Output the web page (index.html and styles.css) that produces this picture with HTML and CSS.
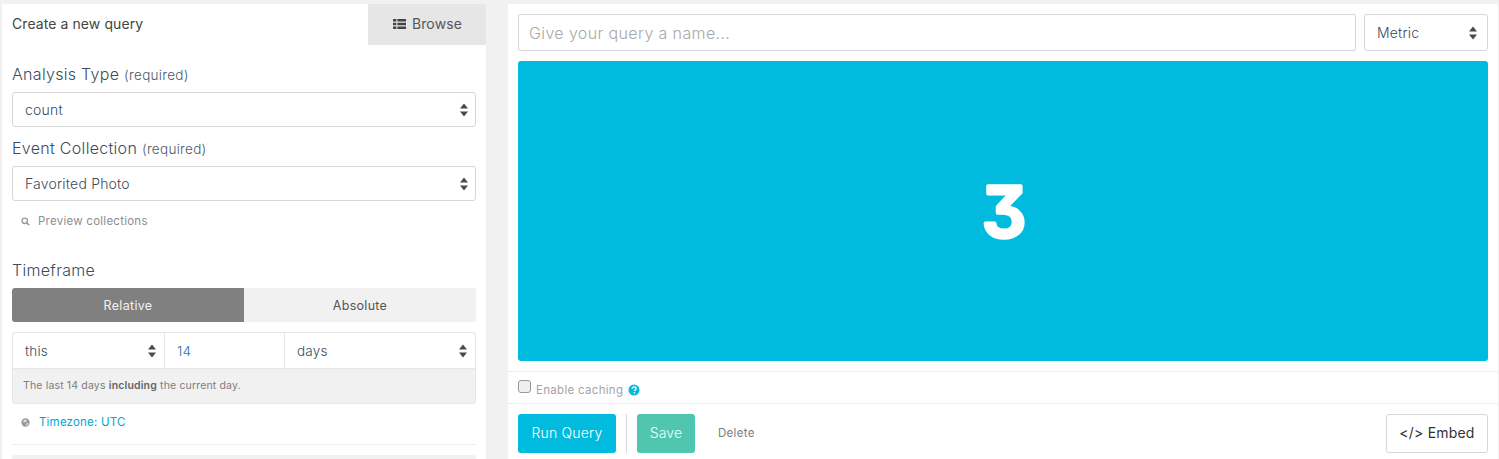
FILE: index.html
```html
<!DOCTYPE html>
<html lang="en">
<head>
<meta charset="utf-8">
<title>Create a new query</title>
<link rel="stylesheet" href="styles.css">
</head>
<body>
<svg class="defs" width="0" height="0" aria-hidden="true">
  <symbol id="updown" viewBox="0 0 10 16"><path d="M5 1.5 9 6.5H1zM5 14.5 1 9.5h8z"/></symbol>
</svg>
<div class="page">
  <aside class="left">
    <div class="tabs">
      <div class="tab-active">Create a new query</div>
      <div class="tab-browse">
        <svg class="th" viewBox="0 0 13 10"><path d="M0 0h3.4v2.6H0zM4.4 0H13v2.6H4.4zM0 3.7h3.4v2.6H0zM4.4 3.7H13v2.6H4.4zM0 7.4h3.4V10H0zM4.4 7.4H13V10H4.4z"/></svg>
        <span>Browse</span>
      </div>
    </div>
    <div class="form">
      <h3 class="label first">Analysis Type <small>(required)</small></h3>
      <div class="select"><span>count</span><svg class="arrows"><use href="#updown"/></svg></div>
      <h3 class="label second">Event Collection <small>(required)</small></h3>
      <div class="select"><span>Favorited Photo</span><svg class="arrows"><use href="#updown"/></svg></div>
      <div class="hint preview">
        <svg class="mini" viewBox="0 0 10 10"><circle cx="4.2" cy="4.2" r="3" fill="none" stroke="#9a9a9a" stroke-width="1.5"/><path d="M6.5 6.5 9.2 9.2" stroke="#9a9a9a" stroke-width="1.7"/></svg>
        <span>Preview collections</span>
      </div>
      <h3 class="label third">Timeframe</h3>
      <div class="toggle">
        <div class="toggle-on">Relative</div>
        <div class="toggle-off">Absolute</div>
      </div>
      <div class="group">
        <div class="group-row">
          <div class="cell cell-this"><span>this</span><svg class="arrows"><use href="#updown"/></svg></div>
          <div class="cell cell-num">14</div>
          <div class="cell cell-days"><span>days</span><svg class="arrows"><use href="#updown"/></svg></div>
        </div>
        <div class="group-help">The last 14 days <b>including</b> the current day.</div>
      </div>
      <div class="hint zone">
        <svg class="mini" viewBox="0 0 10 10"><circle cx="5" cy="5" r="4.6" fill="#9a9a9a"/><path d="M3 2.2 6 1.6 6.6 3.4 4.6 5 2.4 4.2zM6 6 8.2 5.4 7.4 8 6 8.6z" fill="#dedede"/></svg>
        <a class="link">Timezone: UTC</a>
      </div>
      <div class="rule"></div>
      <div class="next-box"></div>
    </div>
  </aside>
  <main class="right">
    <div class="top-row">
      <div class="name-input">Give your query a name...</div>
      <div class="select metric"><span>Metric</span><svg class="arrows"><use href="#updown"/></svg></div>
    </div>
    <div class="chart">
      <svg class="value-svg" viewBox="0 0 80 100"><text class="metric-value" x="41" y="75.5" text-anchor="middle">3</text></svg>
    </div>
    <div class="caching">
      <span class="check"></span>
      <span class="caching-label">Enable caching</span>
      <svg class="help" viewBox="0 0 12 12"><circle cx="6" cy="6" r="5.5" fill="#00bbde"/><path d="M4.2 4.7c0-1.1.8-1.8 1.9-1.8s1.9.7 1.9 1.6c0 1.4-1.5 1.4-1.5 2.5" fill="none" stroke="#fff" stroke-width="1.4"/><path d="M5.7 8.1h1.4v1.4H5.7z" fill="#fff"/></svg>
    </div>
    <div class="actions">
      <div class="btn btn-run">Run Query</div>
      <div class="divider"></div>
      <div class="btn btn-save">Save</div>
      <div class="btn-delete">Delete</div>
      <div class="btn btn-embed">&lt;/&gt; Embed</div>
    </div>
  </main>
</div>
</body>
</html>
```

FILE: styles.css
```css
* { box-sizing: border-box; }
html, body { margin: 0; height: 459px; overflow: hidden; }
body {
  background: #f1f1f1;
  font-family: Inter, "Noto Sans", sans-serif;
  color: #4d5b6b;
}
.defs { position: absolute; }
.page { display: flex; padding: 4px 0 0 2px; height: 459px; }
.left { width: 484px; height: 455px; background: #fff; overflow: hidden; flex: none; }
.tabs { display: flex; height: 41px; }
.tab-active { width: 363px; padding: 0 0 0 10px; font-size: 14px; letter-spacing: .08px; line-height: 40px; color: #444; }
.tab-browse {
  margin-left: 3px; width: 118px; height: 41px; background: #e6e6e6;
  display: flex; align-items: center; justify-content: center; gap: 6px;
  font-size: 14px; letter-spacing: .15px; color: #555; padding: 0 0 2px 1px;
}
.th { width: 13px; height: 10px; fill: #444; }
.form { padding: 0 10px; }
.label { margin: 0; font-size: 16px; font-weight: 300; line-height: 20px; letter-spacing: .3px; color: #3d4b5b; }
.label small { font-size: 13.5px; font-weight: 300; letter-spacing: .3px; color: #4d5966; }
.first { margin-top: 19px; margin-bottom: 7px; }
.second { margin-top: 11px; margin-bottom: 7px; }
.third { margin-top: 31px; margin-bottom: 8px; }
.select {
  display: flex; align-items: center; justify-content: space-between;
  height: 35px; padding: 0 6px 0 12px;
  border: 1px solid #d6d6d6; border-radius: 3px; background: #fff;
  font-size: 14px; letter-spacing: .2px; font-weight: 300; color: #3d4b5b;
}
.arrows { width: 10px; height: 16px; fill: #4a4a4a; flex: none; }
.hint { display: flex; align-items: center; gap: 8px; padding-left: 9px; font-size: 11.5px; letter-spacing: .25px; color: #8a8f94; }
.preview { margin-top: 12px; height: 16px; }
.mini { width: 9px; height: 9px; flex: none; }
.toggle { display: flex; height: 34px; border-radius: 3px; overflow: hidden; font-size: 12.5px; letter-spacing: .3px; }
.toggle > div { flex: 1; display: flex; align-items: center; justify-content: center; }
.toggle-on { background: #808080; color: #f2f2f2; }
.toggle-off { background: #f1f1f1; color: #555; }
.group { margin-top: 10px; border: 1px solid #e6e6e6; border-radius: 3px; height: 72px; }
.group-row { display: flex; height: 36px; border-bottom: 1px solid #e6e6e6; }
.cell { display: flex; align-items: center; justify-content: space-between; padding: 0 7px 0 12px; font-size: 13.5px; letter-spacing: .2px; font-weight: 300; color: #3d4b5b; }
.cell-this { width: 152px; border-right: 1px solid #e6e6e6; }
.cell-num { width: 120px; border-right: 1px solid #e6e6e6; color: #1f78a8; }
.cell-days { flex: 1; }
.group-help { height: 34px; background: #f1f1f1; padding-left: 10px; font-size: 10.5px; letter-spacing: .16px; line-height: 34px; color: #7d7d7d; }
.group-help b { font-weight: 600; color: #666; }
.zone { margin-top: 10px; height: 16px; letter-spacing: .2px; padding-left: 9px; gap: 9px; }
.link { color: #00a9d0; }
.rule { margin-top: 14px; height: 1px; background: #ececec; }
.next-box { margin-top: 10px; height: 10px; background: #f1f1f1; border-radius: 3px; }
.right { margin-left: 22px; width: 991px; height: 455px; background: #fff; padding: 10px 0 0 10px; border-right: 1px solid #f1f1f1; flex: none; }
.top-row { display: flex; gap: 8px; width: 970px; height: 37px; }
.name-input {
  flex: 1; border: 1px solid #d6d6d6; border-radius: 2px; padding-left: 10px;
  font-size: 16px; letter-spacing: .38px; font-weight: 300; line-height: 37px; color: #a8a8a8;
}
.metric { width: 124px; height: 37px; padding-right: 9px; }
.chart {
  margin-top: 10px; width: 970px; height: 300px; border-radius: 3px; background: #00bbde;
  display: flex; align-items: center; justify-content: center;
}
.value-svg { width: 80px; height: 100px; }
.metric-value {
  font-size: 70px; font-weight: 600; fill: #fff;
  font-feature-settings: "cv09" 1;
  stroke: #fff; stroke-width: 3.5px; stroke-linejoin: round;
}
.caching {
  margin: 10px 0 0 -10px; padding-left: 10px; height: 33px;
  border-top: 1px solid #ececec; border-bottom: 1px solid #ececec;
  display: flex; align-items: center; gap: 5px; font-size: 11.5px; letter-spacing: .3px; color: #a5a5a5;
}
.caching-label { padding-top: 4px; }
.check { width: 13px; height: 13px; margin-top: -3px; border: 1px solid #9a9a9a; border-radius: 3px; background: #f0f0f0; }
.help { width: 12px; height: 12px; margin: 4px 0 0 0; }
.actions { display: flex; align-items: center; margin-top: 10px; width: 970px; height: 39px; }
.btn { display: flex; align-items: center; justify-content: center; height: 39px; padding-bottom: 2px; border-radius: 3px; font-size: 14px; letter-spacing: .2px; font-weight: 300; }
.btn-run { width: 98px; background: #00bbde; color: #fff; }
.divider { width: 1px; height: 39px; margin: 0 10px; background: #d8d8d8; }
.btn-save { width: 58px; background: #50c5b0; color: #f4fffc; }
.btn-delete { margin-left: 23px; padding-bottom: 2px; font-size: 11.5px; letter-spacing: .3px; color: #7d7d7d; }
.btn-embed { margin-left: auto; width: 102px; border: 1px solid #d6d6d6; color: #333; font-weight: 400; }
```
